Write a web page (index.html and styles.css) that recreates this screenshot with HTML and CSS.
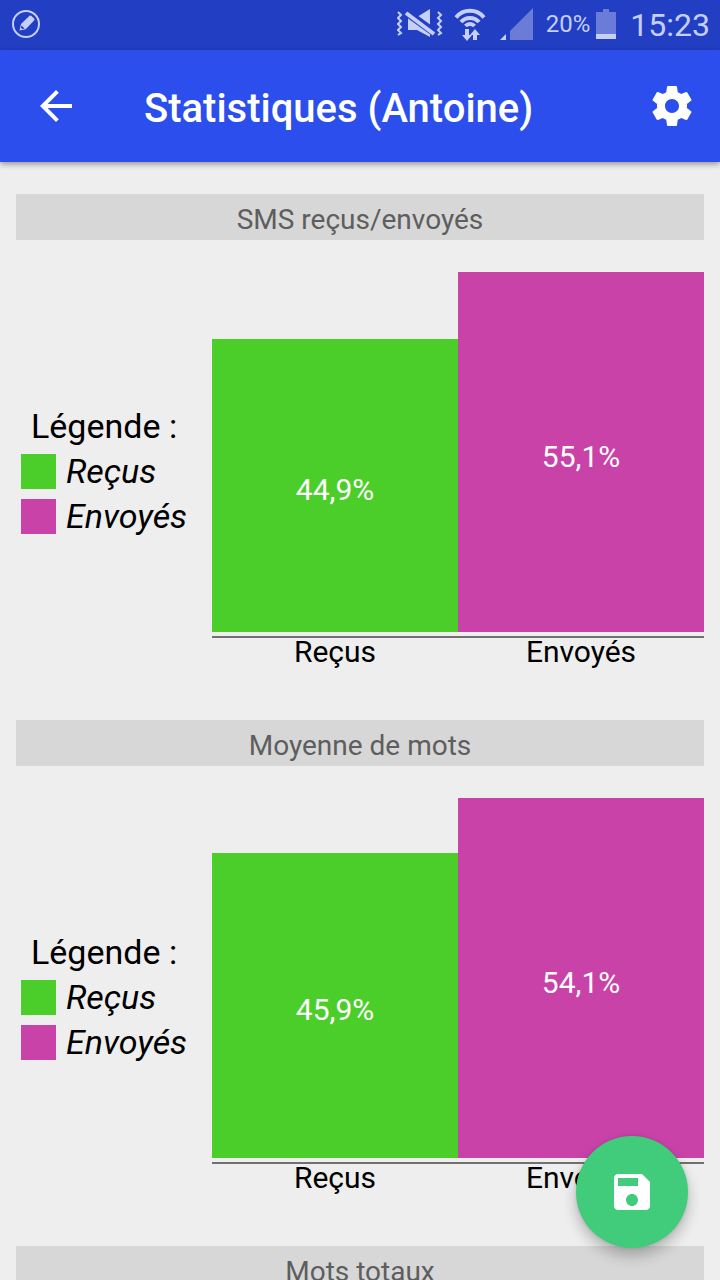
FILE: index.html
```html
<!DOCTYPE html>
<html lang="fr">
<head>
<meta charset="utf-8">
<meta name="viewport" content="width=device-width, initial-scale=1">
<title>Statistiques (Antoine)</title>
<link rel="stylesheet" href="styles.css">
</head>
<body>
<div class="app">
  <div class="status">
    <svg class="note" width="28" height="28" viewBox="0 0 28 28" aria-hidden="true">
      <circle cx="14" cy="14" r="13" fill="none" stroke="currentColor" stroke-width="2"/>
      <path d="M7.500 20.500l1.500-6.500 8.500-8.200q1-.8 2 .1l2.600 2.700q.9 1 0 1.900l-8.400 8.700z" fill="currentColor"/>
      <path d="M9.500 15.500l3.200 3-2.400.6-1.400-1.400z" fill="#223fc4"/>
    </svg>
    <div class="indicators">
      <svg width="46" height="32" viewBox="0 0 46 32" aria-hidden="true">
        <g fill="none" stroke="currentColor" stroke-width="2">
          <path d="M1 4l3 3-3 3 3 3-3 3 3 3-3 3 3 3-3 2"/>
          <path d="M41 4l3 3-3 3 3 3-3 3 3 3-3 3 3 3-3 2"/>
        </g>
        <path d="M11 9h9L33 1v28l-13-7h-9z" fill="currentColor"/>
        <path d="M9 4l29 21" stroke="#223fc4" stroke-width="8"/>
        <path d="M9 5l28 21" stroke="currentColor" stroke-width="4"/>
      </svg>
      <svg class="wifi" width="34" height="36" viewBox="0 0 34 36" aria-hidden="true">
        <g fill="none" stroke="currentColor" stroke-width="4">
          <path d="M2 11.500a18 18 0 0 1 28 0"/>
          <path d="M7 16a12 12 0 0 1 18 0"/>
          <path d="M11.500 20a6 6 0 0 1 9 0"/>
        </g>
        <path d="M11 23h4v6h3l-5 6-5-6h3zM19 34h4v-5h3l-5-6-5 6h3z" fill="currentColor"/>
      </svg>
      <svg class="signal" width="34" height="32" viewBox="0 0 34 32" aria-hidden="true">
        <path d="M10 32V23L33 0v32z" fill="#6a7cd8"/>
        <path d="M0 32l6-6v6z" fill="currentColor"/>
      </svg>
      <span class="percent">20%</span>
      <svg class="battery" width="20" height="30" viewBox="0 0 20 30" aria-hidden="true">
        <path d="M7 0h6v3h7v27H0V3h7z" fill="#6a7cd8"/>
        <path d="M0 25h20v5H0z" fill="currentColor"/>
      </svg>
      <span class="clock">15:23</span>
    </div>
  </div>
  <header class="toolbar">
    <button class="tool" type="button" aria-label="Retour">
      <svg width="48" height="48" viewBox="0 0 24 24" fill="currentColor"><path d="M20 11H7.830l5.590-5.590L12 4l-8 8 8 8 1.410-1.410L7.830 13H20v-2z"/></svg>
    </button>
    <h1 class="title">Statistiques (Antoine)</h1>
    <button class="tool settings" type="button" aria-label="Paramètres">
      <svg width="48" height="48" viewBox="0 0 24 24" fill="currentColor"><path d="M19.430 12.980c.04-.32.07-.64.07-.98s-.03-.66-.07-.98l2.110-1.650c.19-.15.24-.42.12-.64l-2-3.460c-.12-.22-.39-.3-.61-.22l-2.490 1c-.52-.4-1.080-.73-1.690-.98l-.38-2.650C14.460 2.180 14.250 2 14 2h-4c-.25 0-.46.18-.49.42l-.38 2.650c-.61.25-1.170.59-1.690.98l-2.490-1c-.23-.09-.49 0-.61.22l-2 3.460c-.13.22-.07.49.12.64l2.110 1.650c-.04.32-.07.65-.07.98s.03.66.07.98l-2.110 1.650c-.19.15-.24.42-.12.64l2 3.460c.12.22.39.3.61.22l2.490-1c.52.4 1.080.73 1.690.98l.38 2.650c.03.24.24.42.49.42h4c.25 0 .46-.18.49-.42l.38-2.650c.61-.25 1.170-.59 1.690-.98l2.490 1c.23.09.49 0 .61-.22l2-3.460c.12-.22.07-.49-.12-.64l-2.110-1.650zM12 15.500c-1.930 0-3.500-1.570-3.500-3.500s1.570-3.500 3.500-3.500 3.500 1.570 3.500 3.500-1.570 3.500-3.500 3.500z"/></svg>
    </button>
  </header>
  <main class="content">
    <section class="stat">
      <h2 class="heading">SMS reçus/envoyés</h2>
      <div class="panel">
        <div class="legend">
          <p class="legend-title">Légende :</p>
          <ul class="keys">
            <li class="key"><span class="swatch received"></span>Reçus</li>
            <li class="key"><span class="swatch sent"></span>Envoyés</li>
          </ul>
        </div>
        <div class="chart">
          <div class="bars">
            <div class="bar received" style="height: 81.5%">44,9%</div>
            <div class="bar sent" style="height: 100%">55,1%</div>
          </div>
          <div class="axis"><span>Reçus</span><span>Envoyés</span></div>
        </div>
      </div>
    </section>
    <section class="stat">
      <h2 class="heading">Moyenne de mots</h2>
      <div class="panel">
        <div class="legend">
          <p class="legend-title">Légende :</p>
          <ul class="keys">
            <li class="key"><span class="swatch received"></span>Reçus</li>
            <li class="key"><span class="swatch sent"></span>Envoyés</li>
          </ul>
        </div>
        <div class="chart">
          <div class="bars">
            <div class="bar received" style="height: 84.8%">45,9%</div>
            <div class="bar sent" style="height: 100%">54,1%</div>
          </div>
          <div class="axis"><span>Reçus</span><span>Envoyés</span></div>
        </div>
      </div>
    </section>
    <section class="stat">
      <h2 class="heading">Mots totaux</h2>
    </section>
  </main>
  <button class="fab" type="button" aria-label="Enregistrer">
    <svg width="48" height="48" viewBox="0 0 24 24" fill="currentColor"><path d="M17 3H5c-1.110 0-2 .9-2 2v14c0 1.100.89 2 2 2h14c1.100 0 2-.9 2-2V7l-4-4zm-5 16c-1.660 0-3-1.340-3-3s1.340-3 3-3 3 1.340 3 3-1.340 3-3 3zm3-10H5V5h10v4z"/></svg>
  </button>
</div>
</body>
</html>
```

FILE: styles.css
```css
* { box-sizing: border-box; }

body {
  margin: 0;
  background: #eeeeee;
  color: #000;
  font-family: Roboto, "Noto Sans", sans-serif;
}

h1, h2, p, ul { margin: 0; padding: 0; }
ul { list-style: none; }
svg { display: block; flex: none; }

button {
  display: grid;
  place-items: center;
  padding: 0;
  border: 0;
  background: none;
  color: #fff;
  cursor: pointer;
}

.app {
  display: flex;
  flex-direction: column;
  height: 100vh;
  overflow: hidden;
}

.status {
  display: flex;
  flex: none;
  align-items: center;
  justify-content: space-between;
  height: 50px;
  padding: 0 10px 2px 12px;
  background: #223fc4;
  color: #c5cff8;
}

.indicators { display: flex; align-items: center; }
.wifi { margin-left: 11px; }
.signal { margin-left: 12px; }
.percent { margin-left: 12px; font-size: 24px; line-height: 32px; }
.battery { margin-left: 6px; }
.clock { margin-left: 14px; padding-top: 2px; font-size: 32px; line-height: 46px; }

.toolbar {
  display: flex;
  flex: none;
  align-items: center;
  height: 112px;
  background: #2b4eec;
  color: #fff;
  box-shadow: 0 2px 6px rgba(0, 0, 0, 0.4);
  z-index: 1;
}

.tool { width: 112px; height: 112px; }
.settings { width: 96px; }

.title {
  flex: 1;
  padding: 6px 0 0 32px;
  font-size: 40px;
  font-weight: 500;
  line-height: 48px;
}

.content {
  flex: 1;
  min-height: 0;
  padding: 32px 16px;
  overflow-y: auto;
  scrollbar-width: none;
}

.stat { margin-bottom: 46px; }

.heading {
  padding-top: 6px;
  background: #d7d7d7;
  color: #5e5e5e;
  font-size: 28px;
  font-weight: 400;
  line-height: 40px;
  text-align: center;
}

.panel {
  display: flex;
  align-items: center;
  padding-top: 32px;
}

.legend {
  flex: none;
  width: 196px;
  padding: 0 0 4px 5px;
  font-size: 34px;
  line-height: 45px;
}

.legend-title { padding-left: 10px; }
.key { display: flex; align-items: center; gap: 10px; font-style: italic; }
.swatch { width: 35px; height: 35px; }
.received { background: #4bce2a; }
.sent { background: #c942a8; }

.chart { flex: 1; }

.bars {
  display: flex;
  align-items: flex-end;
  height: 364px;
  padding-bottom: 4px;
}

.bar {
  display: grid;
  flex: 1;
  place-items: center;
  padding-top: 10px;
  color: #fff;
  font-size: 30px;
  line-height: 36px;
}

.axis {
  display: flex;
  height: 38px;
  border-top: 2px solid #707070;
  font-size: 30px;
  line-height: 36px;
}

.axis span { flex: 1; margin-top: -4px; text-align: center; }

.fab {
  position: fixed;
  right: 32px;
  bottom: 32px;
  z-index: 2;
  width: 112px;
  height: 112px;
  border-radius: 50%;
  background: #41cc7c;
  box-shadow: 0 8px 14px rgba(0, 0, 0, 0.24), 0 0 4px rgba(0, 0, 0, 0.12);
}
```
